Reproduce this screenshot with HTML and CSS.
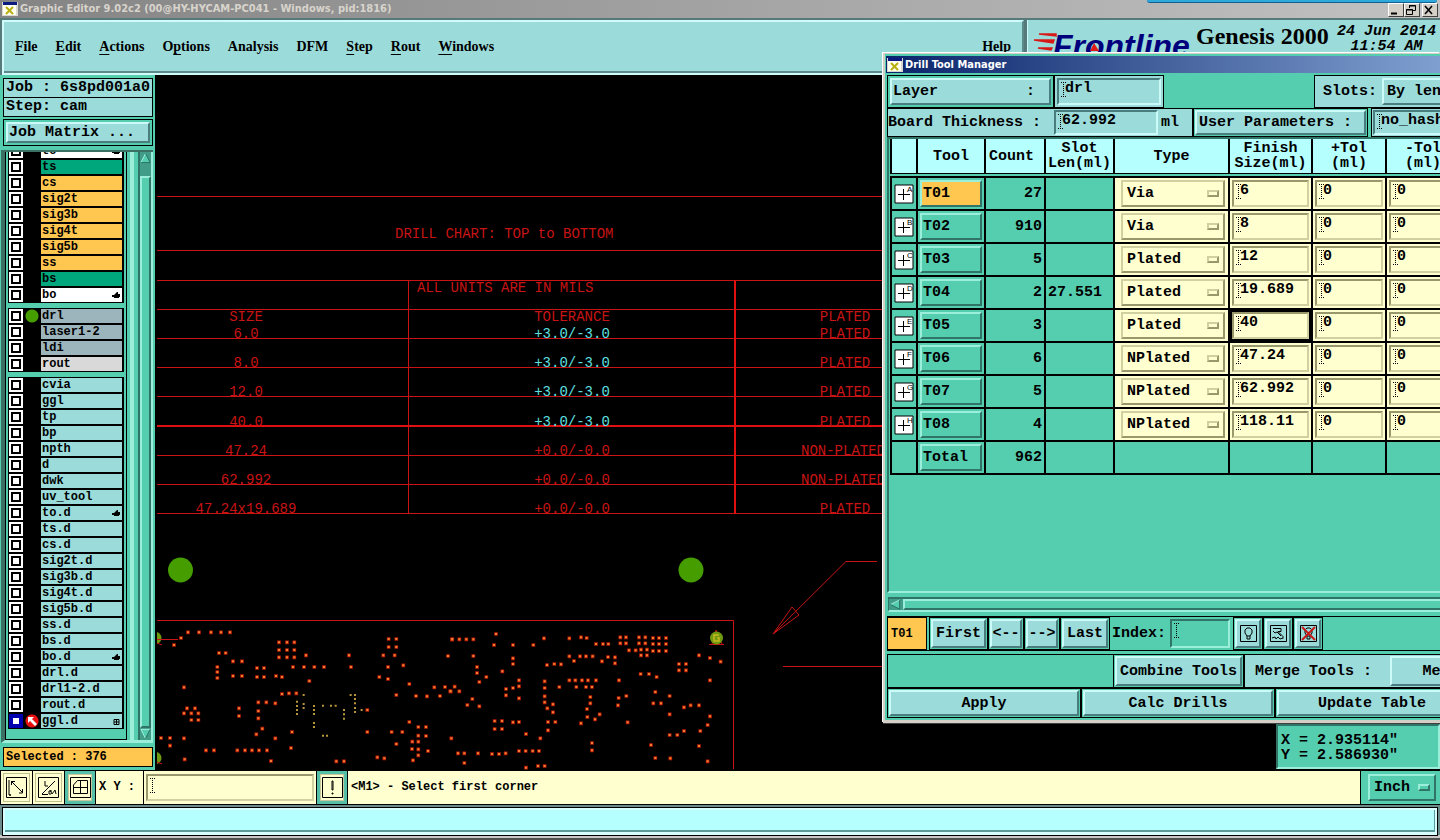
FILE: index.html
```html
<!DOCTYPE html>
<html lang="en">
<head>
    <meta charset="UTF-8">
    <meta name="viewport" content="width=device-width, initial-scale=1.0">
    <title>Graphic Editor</title>
    <link rel="stylesheet" href="styles.css">
</head>
<body>
    <svg class="defs" width="0" height="0">
        <symbol id="app" viewBox="0 0 16 14">
            <path d="M0 0h16v14H0z" fill="#d8d8d0"/><path d="M1 0h14v3H1z" fill="#0a1a80"/><path d="M1 3h13v10H1z" fill="#fffff0"/>
            <path d="M4 5l7 7M11 5l-7 7" stroke="#b8b010" stroke-width="2"/>
        </symbol>
        <symbol id="hand" viewBox="0 0 8 8"><path d="M0 4h2l3-3h1v2h2v3H7v1H2V6H0z"/></symbol>
        <symbol id="plus" viewBox="0 0 20 20">
            <path d="M1 1h18v18H1z" fill="#fff" stroke="#000"/><path d="M4 10.500h12M9.500 5v11" stroke="#000"/>
        </symbol>
    </svg>

    <header class="titlebar">
        <svg class="app"><use href="#app"/></svg>
        <h1>Graphic Editor 9.02c2 (00@HY-HYCAM-PC041 - Windows, pid:1816)</h1>
        <div class="winbtns">
            <button aria-label="Minimize"><svg viewBox="0 0 12 10"><path d="M2 8.500h6" stroke="#000" stroke-width="2"/></svg></button>
            <button aria-label="Restore"><svg viewBox="0 0 12 10"><path d="M4.500 3V.5h6v5H8M4 1h7M1.500 4.500h6v5h-6zM1 5h7" fill="none" stroke="#000"/></svg></button>
            <button class="close" aria-label="Close"><svg viewBox="0 0 12 10"><path d="M2 1l7 8M9 1L2 9" stroke="#000" stroke-width="1.600"/></svg></button>
        </div>
        <div class="tab"></div>
    </header>

    <div class="banner">
        <nav class="menubar">
            <a href="#"><u>F</u>ile</a>
            <a href="#"><u>E</u>dit</a>
            <a href="#"><u>A</u>ctions</a>
            <a href="#">O<u>p</u>tions</a>
            <a href="#">Analysis</a>
            <a href="#">DFM</a>
            <a href="#"><u>S</u>tep</a>
            <a href="#"><u>R</u>out</a>
            <a href="#"><u>W</u>indows</a>
            <a href="#" class="help"><u>H</u>elp</a>
        </nav>
        <div class="brand">
            <svg class="logo" viewBox="0 0 164 44">
                <path d="M7 14h17v2zM2 20h20l-1 3zM6 28h14l-1 2z" stroke="#d81818" stroke-width="1.500" fill="#d81818"/>
                <text x="21" y="37">Frontline</text>
                <path d="M62 23l5 8h-9z" fill="#e01818"/>
            </svg>
            <strong>Genesis 2000</strong>
            <time>24 Jun 2014<br>11:54 AM</time>
        </div>
    </div>

    <main>
        <aside class="sidebar">
            <p class="job">Job : 6s8pd001a0</p>
            <p class="job">Step: cam</p>
            <div class="matrix"><button class="btn">Job Matrix ...</button></div>
            <div class="layers">
                <div class="list">
                    <div class="group">
                        <label class="white"><input type="checkbox"><i></i><span>to</span><svg class="hand"><use href="#hand"/></svg></label>
                        <label class="mask"><input type="checkbox"><i></i><span>ts</span></label>
                        <label class="signal"><input type="checkbox"><i></i><span>cs</span></label>
                        <label class="signal"><input type="checkbox"><i></i><span>sig2t</span></label>
                        <label class="signal"><input type="checkbox"><i></i><span>sig3b</span></label>
                        <label class="signal"><input type="checkbox"><i></i><span>sig4t</span></label>
                        <label class="signal"><input type="checkbox"><i></i><span>sig5b</span></label>
                        <label class="signal"><input type="checkbox"><i></i><span>ss</span></label>
                        <label class="mask"><input type="checkbox"><i></i><span>bs</span></label>
                        <label class="white"><input type="checkbox"><i></i><span>bo</span><svg class="hand"><use href="#hand"/></svg></label>
                    </div>
                    <div class="group">
                        <label class="drill"><input type="checkbox"><i class="dot"></i><span>drl</span></label>
                        <label class="drill"><input type="checkbox"><i></i><span>laser1-2</span></label>
                        <label class="drill"><input type="checkbox"><i></i><span>ldi</span></label>
                        <label class="rout"><input type="checkbox"><i></i><span>rout</span></label>
                    </div>
                    <div class="group">
                        <label><input type="checkbox"><i></i><span>cvia</span></label>
                        <label><input type="checkbox"><i></i><span>ggl</span></label>
                        <label><input type="checkbox"><i></i><span>tp</span></label>
                        <label><input type="checkbox"><i></i><span>bp</span></label>
                        <label><input type="checkbox"><i></i><span>npth</span></label>
                        <label><input type="checkbox"><i></i><span>d</span></label>
                        <label><input type="checkbox"><i></i><span>dwk</span></label>
                        <label><input type="checkbox"><i></i><span>uv_tool</span></label>
                        <label><input type="checkbox"><i></i><span>to.d</span><svg class="hand"><use href="#hand"/></svg></label>
                        <label><input type="checkbox"><i></i><span>ts.d</span></label>
                        <label><input type="checkbox"><i></i><span>cs.d</span></label>
                        <label><input type="checkbox"><i></i><span>sig2t.d</span></label>
                        <label><input type="checkbox"><i></i><span>sig3b.d</span></label>
                        <label><input type="checkbox"><i></i><span>sig4t.d</span></label>
                        <label><input type="checkbox"><i></i><span>sig5b.d</span></label>
                        <label><input type="checkbox"><i></i><span>ss.d</span></label>
                        <label><input type="checkbox"><i></i><span>bs.d</span></label>
                        <label><input type="checkbox"><i></i><span>bo.d</span><svg class="hand"><use href="#hand"/></svg></label>
                        <label><input type="checkbox"><i></i><span>drl.d</span></label>
                        <label><input type="checkbox"><i></i><span>drl1-2.d</span></label>
                        <label><input type="checkbox"><i></i><span>rout.d</span></label>
                        <label><input type="checkbox" checked><i class="work"><svg viewBox="0 0 14 14"><path d="M3 3h6L7 5l5 5-2 2-5-5-2 2z" fill="#fff"/></svg></i><span>ggl.d</span><svg class="hand" viewBox="0 0 8 8"><path d="M2 2.500h5v5H2zM4.500 2v6M2 5h5" fill="none" stroke="#000"/></svg></label>
                    </div>
                </div>
                <div class="scroll">
                    <svg viewBox="0 0 12 12"><path d="M6 1L1 11h10z" fill="#55ceb0"/><path d="M6 1L1 11" stroke="#a8f0e0"/><path d="M1 11h10L6 1" fill="none" stroke="#2a7060"/></svg>
                    <div class="thumb"></div>
                    <svg viewBox="0 0 12 12"><path d="M1 1h10L6 11z" fill="#55ceb0"/><path d="M6 11L1 1h10" fill="none" stroke="#a8f0e0"/><path d="M11 1L6 11" stroke="#2a7060"/></svg>
                </div>
            </div>
            <p class="selected">Selected : 376</p>
        </aside>

        <section class="canvas">
            <svg class="board">
                <g transform="translate(-155 -75)">
                    <path class="wire" d="M157 196.500h726M157 250.500h726M157 280.500h726M157 309.500h726M157 338.500h726M157 367.500h726M157 396.500h726M157 455.500h726M157 484.500h726M157 513.500h726M408.500 280v234M157 620.500h576.500V769M783 666.500h100"/>
                    <path class="wire thick" d="M157 426h726M735 280v234"/>
                    <path class="wire" d="M773 634l19-27 7 8zM773 634l73-72.500h31"/>
                    <text class="left" x="395" y="238">DRILL CHART: TOP to BOTTOM</text>
                    <text class="left" x="417" y="292">ALL UNITS ARE IN MILS</text>
                    <text x="246" y="321">SIZE</text>
                    <text x="246" y="338">6.0</text>
                    <text x="246" y="367">8.0</text>
                    <text x="246" y="396">12.0</text>
                    <text x="246" y="426">40.0</text>
                    <text x="246" y="455">47.24</text>
                    <text x="246" y="484">62.992</text>
                    <text x="246" y="513">47.24x19.689</text>
                    <text x="572" y="321">TOLERANCE</text>
                    <text x="572" y="338" class="cyan">+3.0/-3.0</text>
                    <text x="572" y="367" class="cyan">+3.0/-3.0</text>
                    <text x="572" y="396" class="cyan">+3.0/-3.0</text>
                    <text x="572" y="426" class="cyan">+3.0/-3.0</text>
                    <text x="572" y="455">+0.0/-0.0</text>
                    <text x="572" y="484">+0.0/-0.0</text>
                    <text x="572" y="513">+0.0/-0.0</text>
                    <text x="845" y="321">PLATED</text>
                    <text x="845" y="338">PLATED</text>
                    <text x="845" y="367">PLATED</text>
                    <text x="845" y="396">PLATED</text>
                    <text x="845" y="426">PLATED</text>
                    <text x="843" y="455">NON-PLATED</text>
                    <text x="843" y="484">NON-PLATED</text>
                    <text x="845" y="513">PLATED</text>
                    <circle cx="180.500" cy="570" r="12.500" fill="#459d00"/>
                    <circle cx="691" cy="570" r="12.500" fill="#459d00"/>
                    <!-- fiducials -->
                    <path d="M157 632c6 2 6 10 0 12zM157 752c6 2 6 10 0 12z" fill="#6f9a10"/>
                    <path class="wire" d="M157 639.500h21M157 643l5 2M157 762l5 2M709 644.500h15M712 644l4-14 6 14"/>
                    <circle cx="716.500" cy="638" r="6.500" fill="#6f9a10"/>
                    <path d="M719 635h-5v6h5v-3h-2" fill="none" stroke="#c8b820" stroke-width="1.500"/>
                </g>
                <!-- vias -->
                <defs>
                    <g id="vias">
                        <path transform="translate(0 470) scale(.3333)" d="M99 262h0M132 262h0M168 262h0M198 262h0M225 262h0M78 279h0M57 300h0M192 324h0M212 324h0M234 349h0M261 349h0M187 366h0M187 381h0M187 399h0M306 369h0M327 369h0M306 396h0M327 396h0M363 393h0M381 396h0M234 393h0M261 393h0M372 292h0M396 292h0M418 292h0M372 315h0M396 315h0M418 315h0M372 337h0M396 337h0M418 337h0M453 331h0M582 331h0M588 366h0M414 366h0M447 366h0M478 366h0M507 366h0M463 408h0M87 427h0M381 447h0M402 445h0M424 445h0M310 472h0M334 472h0M361 475h0M310 498h0M310 520h0M252 490h0M252 513h0M96 490h0M120 490h0M87 505h0M109 505h0M130 505h0M109 525h0M130 525h0M18 579h0M45 579h0M87 580h0M45 602h0M153 616h0M177 616h0M247 616h0M270 616h0M291 616h0M312 616h0M336 616h0M89 643h0M348 648h0M322 551h0M304 568h0M361 580h0M411 561h0M408 609h0M701 282h0M724 282h0M701 306h0M724 306h0M685 331h0M719 331h0M699 366h0M745 361h0M673 396h0M699 402h0M763 417h0M879 333h0M891 283h0M838 427h0M870 426h0M886 439h0M783 453h0M816 454h0M855 453h0M724 450h0M637 495h0M763 531h0M790 546h0M813 546h0M790 572h0M813 573h0M772 590h0M790 590h0M771 612h0M790 613h0M819 618h0M790 631h0M774 646h0M710 561h0M742 561h0M724 597h0M637 561h0M667 637h0M688 640h0M544 649h0M567 649h0"/>
                        <path transform="translate(295 470) scale(.3333)" d="M7 283h0M28 283h0M49 283h0M70 283h0M138 267h0M132 300h0M189 300h0M250 300h0M282 280h0M358 280h0M393 277h0M410 279h0M438 297h0M459 297h0M475 297h0M511 277h0M528 277h0M567 277h0M586 277h0M609 279h0M627 279h0M648 279h0M511 295h0M528 295h0M567 295h0M586 295h0M609 297h0M627 297h0M648 297h0M537 316h0M557 316h0M573 314h0M591 314h0M609 318h0M627 318h0M648 318h0M573 331h0M591 331h0M70 333h0M81 366h0M81 384h0M189 340h0M189 357h0M157 379h0M109 396h0M88 411h0M14 425h0M2 439h0M28 439h0M67 462h0M52 480h0M88 484h0M358 334h0M390 334h0M408 334h0M428 334h0M372 348h0M291 360h0M313 357h0M333 358h0M474 336h0M495 337h0M495 355h0M456 349h0M687 357h0M708 357h0M687 376h0M708 376h0M747 331h0M780 339h0M812 350h0M780 406h0M572 387h0M597 387h0M620 396h0M207 406h0M284 409h0M207 424h0M189 429h0M168 432h0M168 451h0M207 460h0M284 429h0M284 454h0M284 472h0M328 426h0M358 406h0M376 406h0M396 406h0M414 406h0M438 406h0M379 426h0M408 426h0M426 426h0M507 406h0M421 456h0M421 475h0M411 492h0M412 516h0M449 508h0M435 523h0M393 535h0M309 478h0M292 490h0M309 502h0M294 531h0M316 531h0M294 556h0M271 580h0M228 567h0M134 528h0M156 528h0M134 552h0M156 552h0M189 532h0M207 531h0M506 459h0M529 453h0M504 481h0M533 532h0M616 441h0M610 475h0M633 475h0M659 453h0M659 508h0M702 487h0M722 481h0M747 481h0M780 514h0M773 540h0M751 558h0M702 558h0M682 570h0M659 570h0M747 603h0M603 600h0M616 639h0M661 640h0M773 649h0M426 594h0M426 616h0M4 580h0M24 625h0M43 625h0M84 625h0M126 627h0M147 627h0M167 625h0M207 618h0M227 618h0M248 618h0M267 618h0M43 654h0M228 668h0M264 663h0M284 663h0"/>
                    </g>
                </defs>
                <use href="#vias" class="ring"/>
                <use href="#vias" class="hole"/>
                <path class="micro" transform="translate(0 470) scale(.3333)" d="M446 450h0M426 470h0M426 483h0M426 495h0M426 507h0M446 477h0M446 489h0M477 483h0M477 495h0M477 507h0M477 534h0M477 546h0M504 482h0M528 482h0M542 482h0M567 495h0M567 508h0M567 521h0M600 450h0M587 450h0M600 462h0M600 475h0M600 489h0M600 501h0M620 495h0M504 572h0M516 572h0"/>
            </svg>
            <div class="coords">X = 2.935114"<br>Y = 2.586930"</div>
        </section>
    </main>

    <footer>
        <div class="prompt">
            <button class="tool" aria-label="Zoom"><svg viewBox="0 0 21 21"><path d="M.5.5h20v20H.5zM5.500 8V4.500H9M5 4l12 12M16.500 12v4H13M3 18h2M3 3v15h2" fill="none" stroke="#000"/></svg></button>
            <button class="tool" aria-label="Angle"><svg viewBox="0 0 21 21"><path d="M.5.5h20v20H.5zM4 17.500h6M4 17L17 4M7 4v5h3M12 13l2 4 3-4M13 17h-2v-3h3M17 13l1 4" fill="none" stroke="#000"/></svg></button>
            <button class="tool on" aria-label="Grid"><svg viewBox="0 0 21 21"><path d="M.5.5h20v20H.5zM3.500 8l4-4.500h10v13h-14zM3 10.500h15M10.500 3v14" fill="none" stroke="#000"/></svg></button>
            <label class="xylabel" for="xy">X Y :</label>
            <div class="xybox"><input class="field" id="xy" type="text"></div>
            <button class="tool on" aria-label="Alert"><svg viewBox="0 0 21 21"><path d="M.5.5h20v20H.5zM10 4h1v9h-1zM10 16h1v1h-1z" fill="none" stroke="#000"/></svg></button>
            <output>&lt;M1&gt; - Select first corner</output>
            <div class="units"><span class="option"><select class="teal" aria-label="Units"><option>Inch</option></select></span></div>
        </div>
        <div class="status"><div></div></div>
    </footer>

    <section class="dialog">
        <header>
            <svg class="app"><use href="#app"/></svg>
            <h2>Drill Tool Manager</h2>
        </header>
        <div class="row first">
            <div class="cell"><button class="btn layerbtn"><span>Layer</span><span>:</span></button></div>
            <div class="cell blue"><input class="field" type="text" value="drl" aria-label="Layer"></div>
            <div class="fill"></div>
            <div class="cell blue slots"><label for="slots">Slots:</label><select class="btn" id="slots"><option>By length</option></select></div>
        </div>
        <div class="row second">
            <div class="cell blue thick"><label for="thickness">Board Thickness :</label><input class="field" id="thickness" type="text" value="62.992"><span>ml</span></div>
            <div class="cell user"><button class="btn">User Parameters :</button></div>
            <div class="cell blue param"><input class="field" type="text" value="no_hash" aria-label="User parameters"></div>
        </div>
        <div class="sheet">
            <table>
                <colgroup><col class="c1"><col class="c2"><col class="c3"><col class="c4"><col class="c5"><col class="c6"><col class="c7"><col class="c7"></colgroup>
                <thead>
                    <tr><th></th><th>Tool</th><th class="start">Count</th><th>Slot<br>Len(ml)</th><th>Type</th><th>Finish<br>Size(ml)</th><th>+Tol<br>(ml)</th><th>-Tol<br>(ml)</th></tr>
                </thead>
                <tbody>
                    <tr>
                        <td><svg class="mark"><use href="#plus"/><text x="13" y="8">A</text></svg></td>
                        <td><button class="current">T01</button></td><td class="num">27</td><td></td>
                        <td class="edit"><span class="option"><select aria-label="Type"><option>Via</option></select></span></td>
                        <td class="edit"><input class="field" type="text" value="6" aria-label="Finish size"></td>
                        <td class="edit"><input class="field" type="text" value="0" aria-label="Plus tolerance"></td>
                        <td class="edit"><input class="field" type="text" value="0" aria-label="Minus tolerance"></td>
                    </tr>
                    <tr>
                        <td><svg class="mark"><use href="#plus"/><text x="13" y="8">B</text></svg></td>
                        <td><button>T02</button></td><td class="num">910</td><td></td>
                        <td class="edit"><span class="option"><select aria-label="Type"><option>Via</option></select></span></td>
                        <td class="edit"><input class="field" type="text" value="8" aria-label="Finish size"></td>
                        <td class="edit"><input class="field" type="text" value="0" aria-label="Plus tolerance"></td>
                        <td class="edit"><input class="field" type="text" value="0" aria-label="Minus tolerance"></td>
                    </tr>
                    <tr>
                        <td><svg class="mark"><use href="#plus"/><text x="13" y="8">C</text></svg></td>
                        <td><button>T03</button></td><td class="num">5</td><td></td>
                        <td class="edit"><span class="option"><select aria-label="Type"><option>Plated</option></select></span></td>
                        <td class="edit"><input class="field" type="text" value="12" aria-label="Finish size"></td>
                        <td class="edit"><input class="field" type="text" value="0" aria-label="Plus tolerance"></td>
                        <td class="edit"><input class="field" type="text" value="0" aria-label="Minus tolerance"></td>
                    </tr>
                    <tr>
                        <td><svg class="mark"><use href="#plus"/><text x="13" y="8">D</text></svg></td>
                        <td><button>T04</button></td><td class="num">2</td><td>27.551</td>
                        <td class="edit"><span class="option"><select aria-label="Type"><option>Plated</option></select></span></td>
                        <td class="edit"><input class="field" type="text" value="19.689" aria-label="Finish size"></td>
                        <td class="edit"><input class="field" type="text" value="0" aria-label="Plus tolerance"></td>
                        <td class="edit"><input class="field" type="text" value="0" aria-label="Minus tolerance"></td>
                    </tr>
                    <tr>
                        <td><svg class="mark"><use href="#plus"/><text x="13" y="8">E</text></svg></td>
                        <td><button>T05</button></td><td class="num">3</td><td></td>
                        <td class="edit"><span class="option"><select aria-label="Type"><option>Plated</option></select></span></td>
                        <td class="edit focus"><input class="field" type="text" value="40" aria-label="Finish size"></td>
                        <td class="edit"><input class="field" type="text" value="0" aria-label="Plus tolerance"></td>
                        <td class="edit"><input class="field" type="text" value="0" aria-label="Minus tolerance"></td>
                    </tr>
                    <tr>
                        <td><svg class="mark"><use href="#plus"/><text x="13" y="8">F</text></svg></td>
                        <td><button>T06</button></td><td class="num">6</td><td></td>
                        <td class="edit"><span class="option"><select aria-label="Type"><option>NPlated</option></select></span></td>
                        <td class="edit"><input class="field" type="text" value="47.24" aria-label="Finish size"></td>
                        <td class="edit"><input class="field" type="text" value="0" aria-label="Plus tolerance"></td>
                        <td class="edit"><input class="field" type="text" value="0" aria-label="Minus tolerance"></td>
                    </tr>
                    <tr>
                        <td><svg class="mark"><use href="#plus"/><text x="13" y="8">G</text></svg></td>
                        <td><button>T07</button></td><td class="num">5</td><td></td>
                        <td class="edit"><span class="option"><select aria-label="Type"><option>NPlated</option></select></span></td>
                        <td class="edit"><input class="field" type="text" value="62.992" aria-label="Finish size"></td>
                        <td class="edit"><input class="field" type="text" value="0" aria-label="Plus tolerance"></td>
                        <td class="edit"><input class="field" type="text" value="0" aria-label="Minus tolerance"></td>
                    </tr>
                    <tr>
                        <td><svg class="mark"><use href="#plus"/><text x="13" y="8">H</text></svg></td>
                        <td><button>T08</button></td><td class="num">4</td><td></td>
                        <td class="edit"><span class="option"><select aria-label="Type"><option>NPlated</option></select></span></td>
                        <td class="edit"><input class="field" type="text" value="118.11" aria-label="Finish size"></td>
                        <td class="edit"><input class="field" type="text" value="0" aria-label="Plus tolerance"></td>
                        <td class="edit"><input class="field" type="text" value="0" aria-label="Minus tolerance"></td>
                    </tr>
                    <tr>
                        <td></td><td><button>Total</button></td><td class="num">962</td><td></td><td></td><td></td><td></td><td></td>
                    </tr>
                </tbody>
            </table>
        </div>
        <div class="hscroll">
            <svg viewBox="0 0 12 12"><path d="M1 6l10-5v10z" fill="#55ceb0"/><path d="M1 6l10-5" stroke="#a8f0e0"/><path d="M11 1v10L1 6" fill="none" stroke="#2a7060"/></svg>
            <div class="thumb"></div>
        </div>
        <div class="row nav">
            <div class="tag">T01</div>
            <div class="cell"><button class="btn">First</button></div>
            <div class="cell"><button class="btn step">&lt;--</button></div>
            <div class="cell"><button class="btn step">--&gt;</button></div>
            <div class="cell"><button class="btn">Last</button></div>
            <div class="index"><label for="index">Index:</label><input class="field" id="index" type="text"></div>
            <div class="cell"><button class="btn icon" aria-label="Highlight"><svg viewBox="0 0 17 17"><path d="M.5.5h16v16H.5zM7 11L5 8V5l2-2h3l2 2v3l-2 3zM7 11v3h3v-3" fill="none" stroke="#000"/></svg></button></div>
            <div class="cell"><button class="btn icon" aria-label="Path"><svg viewBox="0 0 17 17"><path d="M.5.5h16v16H.5zM3 3.500h8v3H8l5 5v2M3 6l2 2 2-1 4 4M2 13l3-1 1 2 2-2 2 2 3-1" fill="none" stroke="#000"/></svg></button></div>
            <div class="cell"><button class="btn icon" aria-label="Clear highlight"><svg viewBox="0 0 17 17"><path d="M.5.5h16v16H.5zM7 11L5 8V5l2-2h3l2 2v3l-2 3zM7 11v3h3v-3" fill="none" stroke="#000"/><path d="M2 2l13 13M15 2L2 15" stroke="#c81818" stroke-width="2"/></svg></button></div>
        </div>
        <div class="row tools">
            <div class="blank"></div>
            <div class="cell"><button class="btn">Combine Tools</button></div>
            <div class="cell blue merge"><label for="merge">Merge Tools :</label><button class="btn" id="merge">Merge</button></div>
        </div>
        <div class="row actions">
            <div class="cell"><button class="btn">Apply</button></div>
            <div class="cell"><button class="btn">Calc Drills</button></div>
            <div class="cell"><button class="btn">Update Table</button></div>
        </div>
    </section>
</body>
</html>
```
FILE: styles.css
```css
*,*::after{
    box-sizing: border-box;
    margin: 0;
    padding: 0;
}
body{
    display: flex;
    flex-direction: column;
    position: relative;
    height: 100vh;
    overflow: hidden;
    background: #000;
    color: #000;
    font: bold 15px/15px "Liberation Mono", monospace;
}
button,input,select{
    font: inherit;
    color: inherit;
    border-radius: 0;
    appearance: none;
}
.defs{
    position: absolute;
}
.app{
    width: 16px;
    height: 14px;
    flex: none;
}

/* title bar */
.titlebar{
    display: flex;
    align-items: center;
    gap: 2px;
    height: 18px;
    padding: 0 2px;
    background: linear-gradient(to right, #848484, #c2c2c2);
}
h1,h2{
    flex: 1;
    font: bold 11px/14px "DejaVu Sans Condensed", "DejaVu Sans", sans-serif;
    white-space: nowrap;
}
h1{
    color: #d8d4cc;
}
.winbtns{
    display: flex;
    padding-top: 2px;
}
.winbtns button{
    width: 16px;
    height: 14px;
    background: #d4d0c8;
    border: 1px solid;
    border-color: #fff #404040 #404040 #fff;
}
.winbtns svg{
    display: block;
    width: 12px;
    height: 10px;
}
.winbtns .close{
    margin-left: 2px;
}
.tab{
    position: absolute;
    top: 0;
    right: 3px;
    width: 290px;
    height: 3px;
    background: #2fa8dc;
    border-bottom: 1px solid #106090;
    border-radius: 0 0 4px 4px;
}

/* menu and brand */
.banner{
    display: flex;
    height: 57px;
    padding-top: 2px;
    background: #567a7a;
    gap: 3px;
}
.menubar{
    flex: 1;
    display: flex;
    align-items: center;
    gap: 18px;
    margin-left: 2px;
    padding: 0 11px 2px;
    background: #9bdcdb;
    border: 2px solid #d0fbfa;
    border-right-color: #5c8a8a;
    box-shadow: inset 0 -2px #5c8a8a;
}
.menubar a{
    color: #000;
    font: bold 14px/18px "Liberation Serif", serif;
    text-decoration: none;
}
.menubar u{
    text-underline-offset: 3px;
}
.menubar .help{
    margin-left: auto;
}
.brand{
    display: flex;
    width: 413px;
    padding-left: 4px;
    background: #9bdcdb;
    border-left: 1px solid #d0fbfa;
}
.logo{
    width: 164px;
    height: 44px;
}
.logo text{
    fill: #00007c;
    font: italic bold 32px "Liberation Sans", sans-serif;
}
.brand strong{
    flex: 1;
    font: bold 24px/32px "Liberation Serif", serif;
    white-space: nowrap;
}
.brand time{
    padding: 4px 4px 0 0;
    font-style: italic;
    text-align: center;
}

/* sidebar */
main{
    flex: 1;
    display: flex;
    min-height: 0;
}
.sidebar{
    display: flex;
    flex-direction: column;
    width: 155px;
    padding: 3px 2px 3px 1px;
    background: #55ceb0;
}
.job,.selected{
    height: 20px;
    margin: 0 0 0 2px;
    padding: 1px 2px;
    border: 1px solid #000;
    background: #9bdcdb;
    white-space: nowrap;
}
.job + .job{
    margin-top: -1px;
}
.matrix{
    height: 27px;
    margin: 2px 0 4px 2px;
    padding: 2px;
    border: 1px solid #000;
}
.btn{
    background: #9bdcdb;
    border: 2px solid;
    border-color: #cbfaf8 #4a7e7e #4a7e7e #cbfaf8;
}
.matrix .btn{
    width: 100%;
    height: 100%;
    padding-left: 1px;
    text-align: left;
}
.layers{
    flex: 1;
    display: flex;
    gap: 4px;
    min-height: 0;
    margin-bottom: 4px;
    border-top: 2px solid #3c7064;
    border-left: 4px solid #3c7064;
    border-bottom: 3px solid #9aeeda;
}
.list{
    flex: 1;
    display: flex;
    flex-direction: column;
    justify-content: flex-end;
    gap: 5px;
    overflow: hidden;
    padding: 0 2px 10px;
    border: 1px solid #000;
    border-top: 0;
    box-shadow: 3px 0 #55ceb0, 7px 0 #9aeeda;
    font-size: 12px;
    margin-right: 7px;
}
.group{
    flex: none;
    background: #000;
}
.group label{
    display: flex;
    align-items: center;
    height: 16px;
    padding: 0 2px 0 1px;
    --layer: #9bdcdb;
}
.group input{
    width: 14px;
    height: 14px;
    background: #fff;
    box-shadow: inset 0 0 0 2px #fff, inset 0 0 0 4px #000;
}
.group input:checked{
    box-shadow: inset 0 0 0 4px #0000b0;
}
.group i{
    width: 18px;
    height: 14px;
}
.group .dot{
    background: radial-gradient(circle, #459d00 6px, transparent 7px);
}
.group .work{
    padding: 0 2px;
    background: radial-gradient(circle, #e81010 6px, transparent 7px);
}
.work svg{
    display: block;
    width: 14px;
    height: 14px;
}
.group span{
    flex: 1;
    height: 14px;
    line-height: 15px;
    padding-left: 1px;
    background: var(--layer);
}
.group .hand{
    width: 10px;
    height: 14px;
    padding: 3px 2px 3px 0;
    background: var(--layer);
}
.group .white{ --layer: #fff; }
.group .mask{ --layer: #00a67c; }
.group .signal{ --layer: #ffc650; }
.group .drill{ --layer: #9cb4bc; }
.group .rout{ --layer: #d9d9d9; }
.scroll{
    display: flex;
    flex-direction: column;
    width: 15px;
    background: #419c88;
    border-left: 2px solid #2f7466;
    border-right: 2px solid #9aeeda;
}
.scroll svg{
    display: block;
    width: 11px;
    height: 12px;
}
.thumb{
    flex: 1;
    background: #55ceb0;
    border: 2px solid;
    border-color: #9aeeda #2f7466 #2f7466 #9aeeda;
}
.scroll .thumb{
    margin-top: 12px;
}
.selected{
    padding: 2px;
    background: #ffc650;
    font-size: 12px;
}

/* drawing area */
.canvas{
    flex: 1;
    position: relative;
    min-width: 0;
}
.board{
    position: absolute;
    width: 100%;
    height: 100%;
}
.board text{
    fill: #c81414;
    font: 14px "Liberation Mono", monospace;
    text-anchor: middle;
}
.board .left{
    text-anchor: start;
}
.board .cyan{
    fill: #5fe0e0;
}
.wire{
    fill: none;
    stroke: #c81414;
}
.thick.wire{
    stroke-width: 2;
    stroke: #e01010;
}
.ring,.hole,.micro{
    stroke-linecap: square;
}
.ring{
    stroke: #b81c04;
    stroke-width: 11;
}
.hole{
    stroke: #f08030;
    stroke-width: 6;
}
.micro{
    stroke: #b8963c;
    stroke-width: 6;
}
.coords{
    position: absolute;
    right: 0;
    bottom: 1px;
    width: 164px;
    height: 45px;
    padding: 7px 3px;
    background: #55ceb0;
    border: 2px solid;
    border-color: #2f7466 #9aeeda #9aeeda #2f7466;
}

/* prompt and status */
.prompt{
    display: flex;
    height: 35px;
    border: solid #000;
    border-width: 1px 0 1px 1px;
    background: #000;
    gap: 1px;
}
.tool{
    width: 31px;
    background: #ffffcf;
    border: 1px solid #ffffcf;
    box-shadow: inset 0 0 0 1px #ffffcf, inset 0 0 0 2px #c0c090;
}
.tool.on{
    width: 30px;
    border: 3px solid #55bfa8;
    box-shadow: inset 0 0 0 1px #c8c89c;
}
.tool svg{
    display: block;
    width: 21px;
    height: 21px;
    margin: auto;
}
.xylabel,output{
    background: #ffffcf;
    font-size: 12px;
    line-height: 33px;
    padding: 0 3px;
}
.xylabel{
    width: 47px;
}
.xybox{
    width: 172px;
    padding: 3px 2px;
    background: #ffffcf;
}
.field{
    width: 100%;
    height: 27px;
    padding: 0 0 6px 6px;
    border: 2px solid;
    border-color: #98986c #d0d0a0 #d0d0a0 #98986c;
    background:
        repeating-linear-gradient(to right, #000 0 1px, transparent 1px 2px) 2px 2px / 5px 1px no-repeat,
        repeating-linear-gradient(#000 0 1px, transparent 1px 2px) 4px 2px / 1px 15px no-repeat,
        repeating-linear-gradient(to right, #000 0 1px, transparent 1px 2px) 2px 16px / 5px 1px no-repeat,
        #ffffcf;
}
output{
    flex: 1;
}
.units{
    width: 79px;
    padding: 3px 4px 2px 7px;
    background: #55ceb0;
}
.option{
    display: block;
    position: relative;
}
.option::after{
    content: "";
    position: absolute;
    right: 6px;
    top: 10px;
    width: 12px;
    height: 7px;
    border: 2px solid;
    border-color: #d0d0a0 #98986c #98986c #d0d0a0;
}
.units .option::after{
    border-color: #9aeeda #2f7466 #2f7466 #9aeeda;
}
select{
    display: block;
    width: 100%;
    height: 27px;
    padding: 0 4px;
    background: #ffffcf;
    border: 2px solid;
    border-color: #d0d0a0 #98986c #98986c #d0d0a0;
}
select.teal{
    background: #55ceb0;
    border-color: #9aeeda #2f7466 #2f7466 #9aeeda;
}
.status{
    height: 35px;
    padding: 2px 2px 4px;
    background: linear-gradient(#6c8c8c 0 30px, #c8c8c8 30px 33px, #505050 33px);
}
.status div{
    height: 100%;
    border: 1px solid #000;
    background: #b5ffff;
    box-shadow: inset 0 0 0 2px #d8ffff, inset 0 -3px #d8ffff, inset -3px -5px #5c9a9a;
}

/* drill tool manager */
.dialog{
    position: absolute;
    left: 883px;
    right: 0;
    top: 53px;
    padding: 2px 0 2px 2px;
    overflow: hidden;
    background: #55ceb0;
    border: solid #d4d0c8;
    border-width: 1px 0 3px 2px;
    box-shadow: -1px -1px #fff, 0 1px #404040;
}
.dialog header{
    display: flex;
    align-items: center;
    gap: 2px;
    height: 17px;
    margin: 0 0 2px -1px;
    padding-left: 1px;
    background: linear-gradient(to right, #0a246a, #7f9fd0);
    color: #fff;
}
.row{
    display: flex;
}
.cell{
    flex: none;
    padding: 1px;
    border: 1px solid #000;
}
.blue{
    background: #9bdcdb;
}
.first .cell{
    height: 33px;
    padding: 2px;
}
.first .field,.first .btn{
    height: 27px;
}
.layerbtn{
    display: flex;
    justify-content: space-between;
    align-items: center;
    width: 161px;
    padding: 0 14px 0 1px;
}
.first .field{
    width: 104px;
}
.blue .field{
    background-color: #9bdcdb;
    border-color: #4a7e7e #cbfaf8 #cbfaf8 #4a7e7e;
}
.fill{
    flex: none;
    width: 150px;
}
.slots{
    display: flex;
    align-items: center;
    gap: 5px;
}
.slots label{
    padding-left: 6px;
}
.slots .btn{
    width: 160px;
    padding-left: 3px;
    background: #9bdcdb;
    border-color: #cbfaf8 #4a7e7e #4a7e7e #cbfaf8;
}
.second .cell{
    height: 29px;
}
.second .thick{
    display: flex;
    align-items: center;
    width: 306px;
    gap: 3px;
    padding-left: 0;
}
.thick .field{
    width: 104px;
    margin-left: auto;
}
.thick span{
    width: 30px;
}
.second .btn,.second .field{
    height: 25px;
}
.second .field{
    padding-bottom: 4px;
}
.user{
    width: 175px;
}
.user .btn{
    width: 100%;
    padding-left: 2px;
    text-align: left;
}
.param{
    margin-left: 3px;
}
.param .field{
    width: 104px;
}
.sheet{
    min-height: 456px;
    margin-right: -4px;
    padding-left: 2px;
    border: 2px solid;
    border-color: #2f7466 #9aeeda #9aeeda #2f7466;
    overflow: hidden;
}
table{
    table-layout: fixed;
    width: 571px;
    border-spacing: 0;
    margin: -1px 0 0 -1px;
}
.c1{ width: 28px; }
.c2{ width: 68px; }
.c3{ width: 60px; }
.c4{ width: 69px; }
.c5{ width: 115px; }
.c6{ width: 83px; }
.c7{ width: 74px; }
th{
    height: 36px;
    background: #b5ffff;
    border: solid #000;
    border-width: 1px 2px 1px 0;
    white-space: nowrap;
}
th:first-child,td:first-child{
    border-left: 2px solid #000;
}
.start{
    padding-left: 3px;
    text-align: left;
}
thead::after{
    content: "";
    display: table-row;
    height: 2px;
}
td{
    height: 33px;
    padding: 0 2px;
    border: solid #000;
    border-width: 0 2px 2px 0;
}
tbody tr:first-child td{
    height: 35px;
    border-top-width: 2px;
}
td .field{
    display: block;
}
.focus{
    padding: 0;
    box-shadow: inset 0 0 0 2px #000;
}
.focus .field{
    width: 77px;
    margin: auto;
}
.num{
    text-align: right;
}
.edit{
    background: #ffffcf;
}
td .option{
    margin: 0 1px 0 4px;
}
td button{
    display: block;
    width: 100%;
    height: 27px;
    padding-left: 1px;
    background: #55ceb0;
    border: 2px solid;
    border-color: #9aeeda #2f7466 #2f7466 #9aeeda;
    text-align: left;
}
td .current{
    background: #ffc650;
}
.mark{
    display: block;
    width: 20px;
    height: 20px;
}
.mark text{
    font: 8px "Liberation Sans", sans-serif;
}
.hscroll{
    display: flex;
    height: 15px;
    margin: 4px -4px 4px 1px;
    background: #419c88;
    border: solid #2f7466;
    border-width: 2px 0 0 1px;
    border-bottom: 2px solid #9aeeda;
}
.hscroll svg{
    display: block;
    width: 12px;
    height: 11px;
    margin-right: 2px;
}
.nav{
    height: 35px;
    border: solid #000;
    border-width: 1px 0;
}
.tag{
    width: 40px;
    margin: 0 2px 0 0;
    padding-left: 3px;
    background: #ffc650;
    border: 1px solid #000;
    font-size: 12px;
    line-height: 33px;
}
.nav .btn{
    height: 29px;
    padding: 0 3px;
}
.nav .step{
    width: 32px;
    padding: 0;
}
.nav .icon{
    width: 26px;
    padding: 0;
}
.icon svg{
    display: block;
    width: 17px;
    height: 17px;
    margin: auto;
}
.index{
    display: flex;
    align-items: center;
    gap: 4px;
    padding: 0 3px 0 2px;
}
.index .field{
    width: 60px;
    height: 29px;
    background-color: #55ceb0;
    border-color: #2f7466 #9aeeda #9aeeda #2f7466;
}
.tools{
    height: 34px;
    margin-top: 3px;
    border: solid #000;
    border-width: 1px 0 1px 1px;
}
.tools .cell{
    border-width: 0 1px;
}
.tools .btn{
    height: 30px;
    padding: 0 3px;
}
.blank{
    flex: none;
    width: 225px;
}
.merge{
    display: flex;
    align-items: center;
    gap: 18px;
    padding-left: 10px;
}
.merge .btn{
    width: 110px;
}
.actions .cell{
    width: 194px;
    height: 30px;
}
.actions .btn{
    width: 100%;
    height: 26px;
}
```
